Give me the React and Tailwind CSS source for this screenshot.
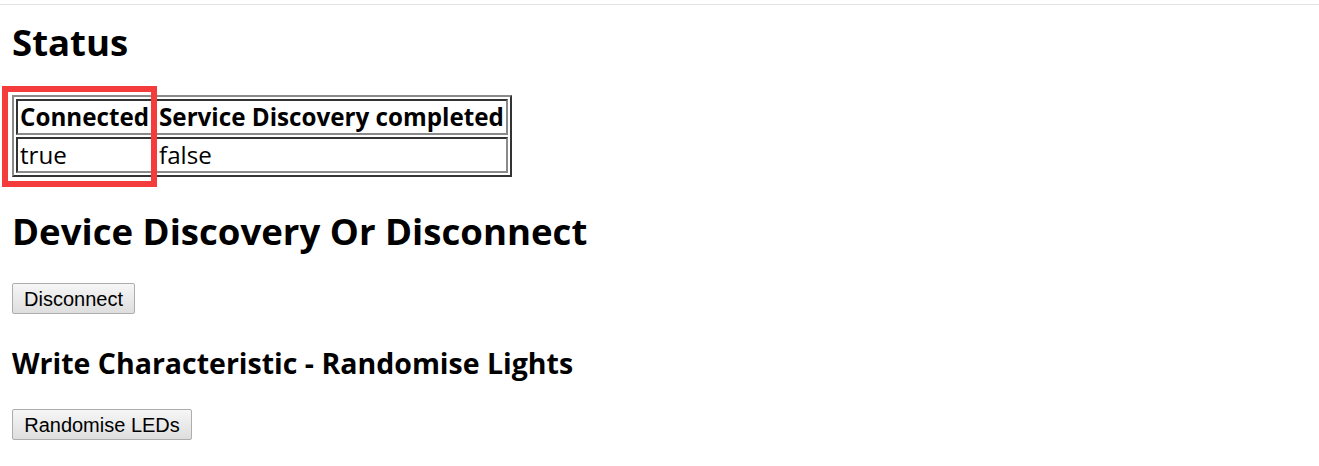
export default function App() {
  const font = { fontFamily: '"Open Sans", "Noto Sans", sans-serif' };
  const th =
    "border-2 border-t-[#333333] border-l-[#333333] border-r-[#8a8a8a] border-b-[#8a8a8a] px-[2px] py-[2px] h-[36px] leading-[28px] text-left font-bold text-[24.2px] text-black whitespace-nowrap";
  const td =
    "border-2 border-t-[#333333] border-l-[#333333] border-r-[#8a8a8a] border-b-[#8a8a8a] px-[2px] py-[2px] h-[36px] leading-[28px] text-left font-normal text-[24.2px] text-black whitespace-nowrap";
  const btn =
    "h-[31px] border border-[#adadad] rounded-[2px] bg-gradient-to-b from-[#f6f6f6] to-[#dedede] text-[20px] leading-[20px] text-black text-center";
  return (
    <div className="relative min-h-[466px] bg-white" style={font}>
      <div className="pt-[4px]">
        <div className="h-px bg-[#e3e3e3]" />
      </div>
      <div className="px-[12px] flex flex-col items-start">
        <h2 className="mt-[13px] text-[36.6px] leading-[48px] font-bold text-black">Status</h2>
        <table className="mt-[29px] border-separate border-spacing-[2px] border-2 border-t-[#8a8a8a] border-l-[#8a8a8a] border-r-[#333333] border-b-[#333333]">
          <thead>
            <tr>
              <th className={th}>Connected</th>
              <th className={th}>Service Discovery completed</th>
            </tr>
          </thead>
          <tbody>
            <tr>
              <td className={td}>true</td>
              <td className={td}>false</td>
            </tr>
          </tbody>
        </table>
        <h2 className="mt-[30px] text-[36.6px] leading-[48px] font-bold text-black">Device Discovery Or Disconnect</h2>
        <button
          className={btn + " mt-[28px] w-[123px]"}
          style={{ fontFamily: '"Liberation Sans", Arial, sans-serif' }}
        >
          Disconnect
        </button>
        <h3 className="mt-[31px] text-[28.5px] leading-[37px] font-bold text-black">Write Characteristic - Randomise Lights</h3>
        <button
          className={btn + " mt-[27px] w-[180px]"}
          style={{ fontFamily: '"Liberation Sans", Arial, sans-serif' }}
        >
          Randomise LEDs
        </button>
      </div>
      <div className="absolute left-[2px] top-[86px] w-[155px] h-[101px] border-[6px] border-[#f53c3c] pointer-events-none" />
    </div>
  );
}
